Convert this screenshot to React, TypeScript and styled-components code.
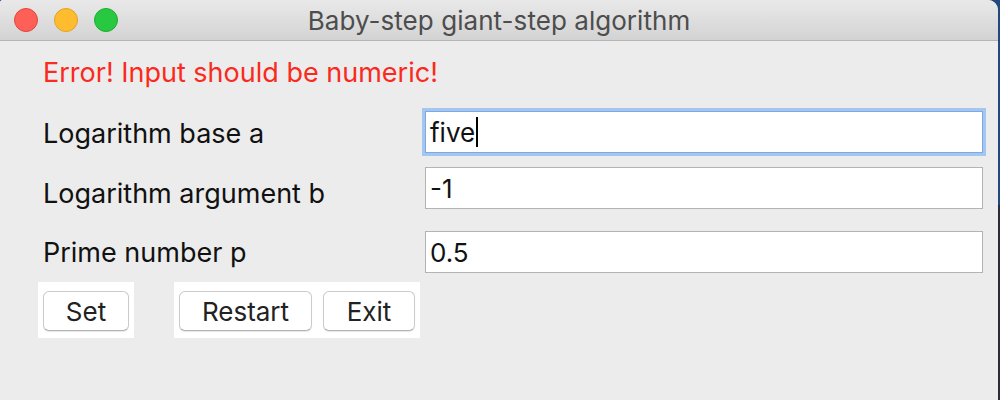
import React from 'react';
import styled, { createGlobalStyle } from 'styled-components';

const GlobalStyle = createGlobalStyle`
  html, body {
    margin: 0;
    padding: 0;
  }
  body {
    width: 1000px;
    height: 400px;
    overflow: hidden;
    background: linear-gradient(to bottom, #23477f 0, #23477f 205px, #2b2f35 205px);
    font-family: Inter, "Noto Sans", sans-serif;
  }
`

const Window = styled.div`
  width: 998px;
  height: 400px;
  background: #ececec;
  border-radius: 3px 10px 0 0;
  overflow: hidden;
  display: flex;
  flex-direction: column;
`
const TitleBar = styled.div`
  height: 40px;
  flex-shrink: 0;
  border-bottom: 1px solid #b4b4b4;
  background: linear-gradient(#e9e9e9, #d3d3d3);
  display: grid;
  grid-template-columns: 1fr auto 1fr;
  align-items: center;
`
const Lights = styled.div`
  display: flex;
  gap: 16px;
  padding-left: 14px;
`
const Light = styled.span<{ $fill: string; $edge: string }>`
  width: 22px;
  height: 22px;
  border-radius: 50%;
  background: ${p => p.$fill};
  border: 1px solid ${p => p.$edge};
`
const Title = styled.div`
  font-size: 26px;
  color: #4d4d4d;
  letter-spacing: 0.05px;
`
const Content = styled.div`
  padding: 17px 0 0 43px;
`
const ErrorText = styled.div`
  height: 30px;
  line-height: 30px;
  font-size: 27px;
  color: #fa2a1d;
  margin-bottom: 15px;
`
const Form = styled.div`
  display: grid;
  grid-template-columns: 382px 558px;
  grid-template-rows: 60px 60px 59px;
`
const Label = styled.div`
  font-size: 27px;
  color: #111;
  display: flex;
  align-items: center;
`
const Field = styled.div<{ $offset: number; $focused?: boolean }>`
  align-self: start;
  margin-top: ${p => p.$offset}px;
  height: 42px;
  box-sizing: border-box;
  background: #fff;
  border: 1px solid ${p => (p.$focused ? '#7ea8de' : '#b3b3b3')};
  box-shadow: ${p => (p.$focused ? '0 0 0 3px #a3c7f0' : 'none')};
  padding: 0 4px;
  display: flex;
  align-items: center;
  font-size: 26px;
  color: #111;
`
const Caret = styled.span`
  display: inline-block;
  width: 2px;
  height: 30px;
  background: #000;
  margin-left: 1px;
`
const ButtonBar = styled.div`
  display: flex;
  gap: 40px;
  margin-left: -5px;
`
const ButtonPanel = styled.div`
  display: flex;
  gap: 11px;
  padding: 9px 5px 7px;
  background: #fff;
`
const Button = styled.button<{ $width: number }>`
  width: ${p => p.$width}px;
  height: 40px;
  box-sizing: border-box;
  border: 1px solid #cbcbcb;
  border-bottom-color: #b3b3b3;
  border-radius: 6px;
  background: #fff;
  box-shadow: 0 1px 1px rgba(0, 0, 0, 0.1);
  font-family: Inter, "Noto Sans", sans-serif;
  font-size: 26px;
  color: #222;
  padding: 0;
`

const rows = [
    { label: 'Logarithm base a', value: 'five', offset: 8, focused: true },
    { label: 'Logarithm argument b', value: '-1', offset: 4 },
    { label: 'Prime number p', value: '0.5', offset: 8 },
]

const App = () => {
    return (
        <>
            <GlobalStyle/>
            <Window>
                <TitleBar>
                    <Lights>
                        <Light $fill="#fe5f57" $edge="#e2463f"/>
                        <Light $fill="#febc2e" $edge="#e1a325"/>
                        <Light $fill="#28c840" $edge="#1fad2f"/>
                    </Lights>
                    <Title>Baby-step giant-step algorithm</Title>
                    <div/>
                </TitleBar>
                <Content>
                    <ErrorText>Error! Input should be numeric!</ErrorText>
                    <Form>
                        {rows.map(r => (
                            <React.Fragment key={r.label}>
                                <Label>{r.label}</Label>
                                <Field $offset={r.offset} $focused={r.focused}>
                                    {r.value}
                                    {r.focused && <Caret/>}
                                </Field>
                            </React.Fragment>
                        ))}
                    </Form>
                    <ButtonBar>
                        <ButtonPanel>
                            <Button $width={86}>Set</Button>
                        </ButtonPanel>
                        <ButtonPanel>
                            <Button $width={133}>Restart</Button>
                            <Button $width={92}>Exit</Button>
                        </ButtonPanel>
                    </ButtonBar>
                </Content>
            </Window>
        </>
    );
};

export default App;
